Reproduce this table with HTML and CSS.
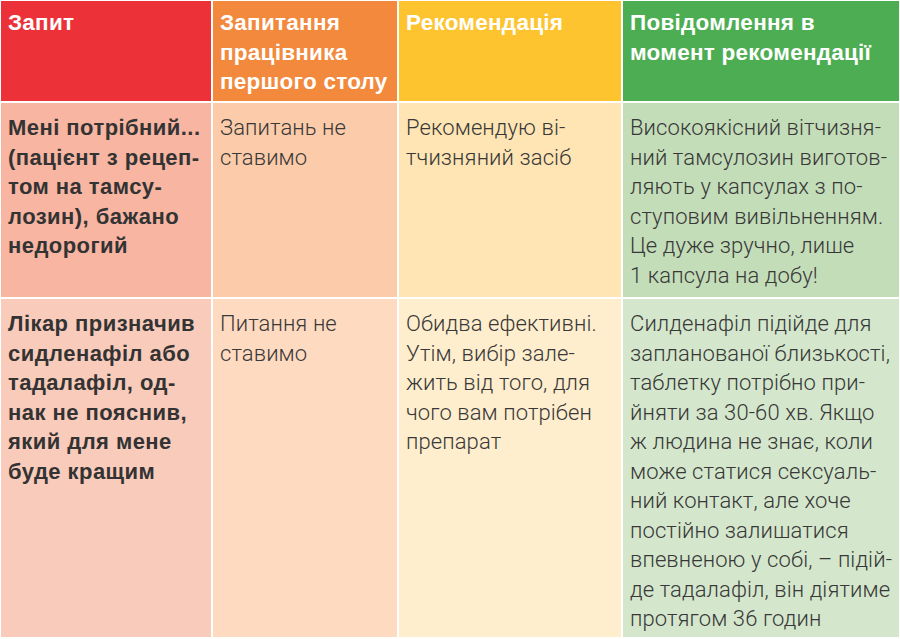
FILE: index.html
```html
<!DOCTYPE html>
<html lang="uk">
<head>
<meta charset="utf-8">
<title>Таблиця рекомендацій</title>
<link rel="stylesheet" href="styles.css">
</head>
<body>
<div class="table">
  <div class="cell head red">Запит</div>
  <div class="cell head orange">Запитання<br>працівника<br>першого столу</div>
  <div class="cell head yellow">Рекомендація</div>
  <div class="cell head green">Повідомлення в<br>момент рекомендації</div>

  <div class="cell bold r1c1">Мені потрібний...<br>(пацієнт з рецеп-<br>том на тамсу-<br>лозин), бажано<br>недорогий</div>
  <div class="cell light r1c2">Запитань не<br>ставимо</div>
  <div class="cell light r1c3">Рекомендую ві-<br>тчизняний засіб</div>
  <div class="cell light r1c4">Високоякісний вітчизня-<br>ний тамсулозин виготов-<br>ляють у капсулах з по-<br>ступовим вивільненням.<br>Це дуже зручно, лише<br>1 капсула на добу!</div>

  <div class="cell bold r2c1">Лікар призначив<br>сидленафіл або<br>тадалафіл, од-<br>нак не пояснив,<br>який для мене<br>буде кращим</div>
  <div class="cell light r2c2">Питання не<br>ставимо</div>
  <div class="cell light r2c3">Обидва ефективні.<br>Утім, вибір зале-<br>жить від того, для<br>чого вам потрібен<br>препарат</div>
  <div class="cell light r2c4">Силденафіл підійде для<br>запланованої близькості,<br>таблетку потрібно при-<br>йняти за 30-60 хв. Якщо<br>ж людина не знає, коли<br>може статися сексуаль-<br>ний контакт, але хоче<br>постійно залишатися<br>впевненою у собі, – підій-<br>де тадалафіл, він діятиме<br>протягом 36 годин</div>
</div>
</body>
</html>
```
FILE: styles.css
```css
html, body {
  margin: 0;
  padding: 0;
  background: #ffffff;
}
.table {
  display: grid;
  grid-template-columns: 210px 184px 222px 276px;
  grid-template-rows: 100px 194px 338px;
  gap: 2px;
  padding: 1px;
  width: 900px;
  box-sizing: border-box;
  background: #ffffff;
}
.cell {
  white-space: nowrap;
  font-size: 21px;
  line-height: 29.5px;
  padding: 11px 2px 0 7px;
  color: #333333;
  overflow: hidden;
}
.head {
  font-family: "Liberation Sans", Arial, sans-serif;
  font-weight: bold;
  font-size: 22.5px;
  letter-spacing: 0.25px;
  color: #ffffff;
  padding-top: 7px;
}
.bold {
  font-family: "Liberation Sans", Arial, sans-serif;
  font-weight: bold;
  font-size: 22px;
  letter-spacing: 0.45px;
  color: #333333;
  padding-top: 10px;
}
.light {
  font-family: Roboto, "Liberation Sans", sans-serif;
  font-weight: 300;
  font-size: 22px;
  letter-spacing: 0.1px;
  color: #383838;
  padding-top: 10px;
}
.red { background: #ec3238; }
.orange { background: #f2893c; }
.yellow { background: #fdc42f; }
.green { background: #4dad52; }
.r1c1 { background: #f7b5a2; }
.r1c2 { background: #fccba9; }
.r1c3 { background: #ffe5b4; }
.r1c4 { background: #c4ddb9; }
.r2c1 { background: #f9cbbb; }
.r2c2 { background: #fedac0; }
.r2c3 { background: #ffeecd; }
.r2c4 { background: #d4e7cc; }
```
